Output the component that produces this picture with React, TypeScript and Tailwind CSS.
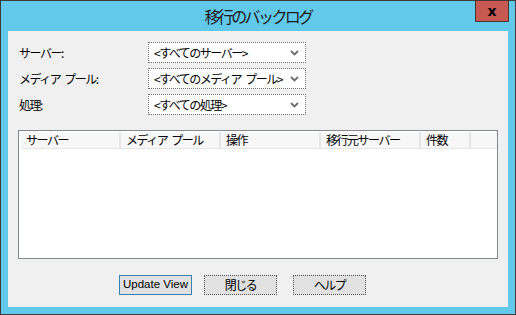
const jp = { fontFamily: '"Noto Sans CJK JP", "Noto Sans", sans-serif' };

const fields = [
  { label: 'サーバー:', value: '<すべてのサーバー>' },
  { label: 'メディア プール:', value: '<すべてのメディア プール>' },
  { label: '処理:', value: '<すべての処理>' },
];

const columns = [
  { title: 'サーバー', w: 'w-[100px]' },
  { title: 'メディア プール', w: 'w-[100px]' },
  { title: '操作', w: 'w-[100px]' },
  { title: '移行元サーバー', w: 'w-[100px]' },
  { title: '件数', w: 'w-[50px]' },
];

function Chevron() {
  return (
    <svg width="9" height="6" viewBox="0 0 9 6" className="shrink-0">
      <path d="M1 1 L4.5 4.5 L8 1" fill="none" stroke="#6b6b6b" strokeWidth="1.8" />
    </svg>
  );
}

export default function App() {
  return (
    <div
      className="flex h-[315px] w-[516px] flex-col border border-[#3c3c3c] bg-[#63c9ea] text-[12px] tracking-[-1.5px] text-black [word-spacing:3px]"
      style={jp}
    >
      {/* title bar */}
      <div className="relative flex h-[30px] shrink-0 items-center justify-center">
        <span className="text-[16px] leading-none tracking-[-2.6px] text-[#1b1b1b]">移行のバックログ</span>
        <div className="absolute right-[6px] top-[-1px] flex h-[22px] w-[34px] items-center justify-center border border-[#4a3434] bg-[#c65a52]">
          <span className="text-[14px] font-bold leading-none tracking-normal" style={{ fontFamily: '"DejaVu Sans", sans-serif' }}>
            x
          </span>
        </div>
      </div>

      {/* client area */}
      <div className="mx-[7px] flex h-[276px] flex-col bg-[#f0f0f0] pl-[11px] pr-[11px] pt-[11px]">
        <div className="flex flex-col gap-[5px]">
          {fields.map((f) => (
            <div key={f.label} className="flex h-[21px] items-center">
              <span className="w-[129px] whitespace-pre leading-none">{f.label}</span>
              <div className="flex h-[21px] w-[158px] items-center justify-between border border-dotted border-[#6e6e6e] bg-white pl-[5px] pr-[6px]">
                <span className="whitespace-pre leading-none">{f.value}</span>
                <Chevron />
              </div>
            </div>
          ))}
        </div>

        {/* list view */}
        <div className="mt-[15px] ml-[-1px] flex h-[129px] w-[480px] flex-col border border-[#828790] bg-white pl-[2px] pt-[1px]">
          <div className="flex h-[17px] border-b border-[#e5e5e5]">
            {columns.map((c) => (
              <div
                key={c.title}
                className={`${c.w} flex items-center whitespace-pre border-r-2 border-[#e5e5e5] bg-[#f7f7f7] pl-[5px] leading-none`}
              >
                {c.title}
              </div>
            ))}
            <div className="flex-1 bg-[#f7f7f7]" />
          </div>
        </div>

        {/* buttons */}
        <div className="mt-[16px] flex pl-[100px]">
          <div
            className="flex h-[20px] w-[73px] items-center justify-center whitespace-nowrap border border-[#3c7fb1] bg-[#e1e1e1] text-[11.5px] leading-none tracking-normal [word-spacing:normal]"
            style={{ fontFamily: '"Liberation Sans", sans-serif' }}
          >
            Update View
          </div>
          <div className="ml-[12px] flex h-[20px] w-[73px] items-center justify-center border border-dotted border-[#555555] bg-[#e1e1e1] leading-none">
            閉じる
          </div>
          <div className="ml-[16px] flex h-[20px] w-[73px] items-center justify-center border border-dotted border-[#555555] bg-[#e1e1e1] leading-none">
            ヘルプ
          </div>
        </div>
      </div>
    </div>
  );
}
